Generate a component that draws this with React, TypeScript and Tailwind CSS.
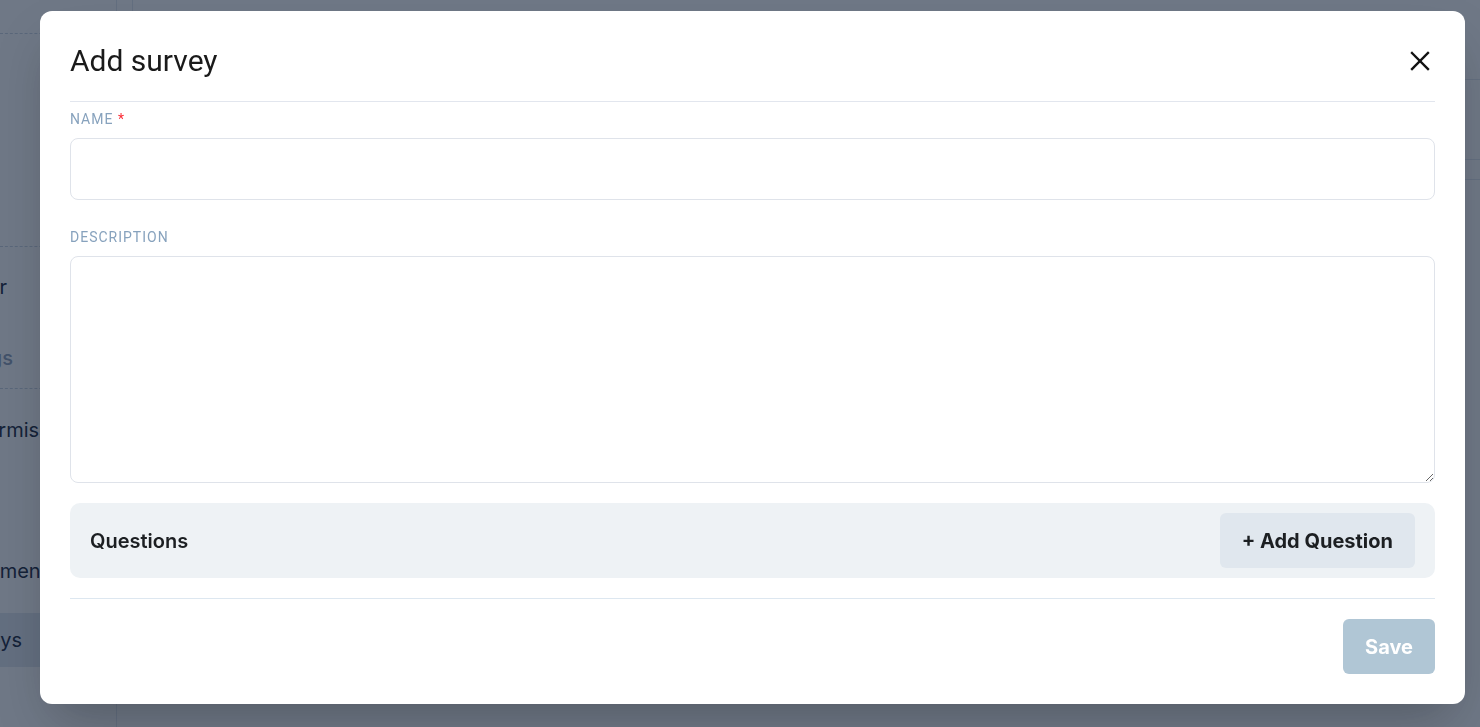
import { useState } from "react";

function CloseIcon() {
  return (
    <svg width="20" height="20" viewBox="0 0 20 20" fill="none" stroke="#111" strokeWidth="2.3" strokeLinecap="square">
      <path d="M2 2 L18 18" />
      <path d="M18 2 L2 18" />
    </svg>
  );
}

function SideItem({ label, end, className = "" }: { label: string; end: number; className?: string }) {
  // text is right-aligned to `end` and spills left, out of the sidebar
  return (
    <div className="flex justify-end whitespace-nowrap" style={{ width: end }}>
      <span className={className}>{label}</span>
    </div>
  );
}

function Background() {
  return (
    <div className="flex h-[727px] w-full bg-white font-['Inter',sans-serif]">
      <aside className="flex w-[117px] shrink-0 flex-col overflow-hidden border-r border-slate-200 bg-white">
        <div className="h-[34px] border-b border-dashed border-slate-300" />
        <div className="h-[213px] border-b border-dashed border-slate-300" />
        <div className="flex h-[80px] items-center text-[20px] text-slate-800">
          <SideItem label="Calendar" end={7} />
        </div>
        <div className="flex h-[62px] items-center border-b border-dashed border-slate-300 text-[20px] font-medium text-slate-400">
          <SideItem label="Settings" end={13} />
        </div>
        <div className="flex h-[82px] items-center text-[20px] text-slate-800">
          <span className="-ml-[26px] whitespace-nowrap">Permissions</span>
        </div>
        <div className="h-[58px]" />
        <div className="flex h-[84px] items-center text-[20px] text-slate-800">
          <span className="-ml-[50px] whitespace-nowrap">Documents</span>
        </div>
        <div className="flex h-[54px] items-center bg-slate-200 text-[20px] text-slate-800">
          <SideItem label="Surveys" end={22} />
        </div>
      </aside>
      <main className="flex flex-1 flex-col">
        <div className="flex h-[80px] border-b border-slate-200">
          <div className="w-[16px] border-r border-slate-200" />
        </div>
        <div className="h-[80px] border-b border-slate-200" />
        <div className="h-[20px] border-b border-slate-200" />
      </main>
    </div>
  );
}

export default function App() {
  const [name, setName] = useState("");
  const [description, setDescription] = useState("");

  return (
    <div className="relative h-[727px] w-[1480px] overflow-hidden">
      <Background />

      <div className="fixed inset-0 bg-[rgba(15,30,53,0.6)]">
        <div className="ml-[40px] mt-[11px] flex w-[1425px] flex-col rounded-[12px] bg-white px-[30px] pb-[30px] pt-[30px] shadow-2xl">
          <div className="flex items-center justify-between border-b border-[#e2e6ee] pb-[20px]">
            <h2 className="font-['Roboto',sans-serif] text-[30px] leading-[40px] text-[#1a1a1a]">Add survey</h2>
            <button className="mr-[5px] flex h-[20px] w-[20px] items-center justify-center">
              <CloseIcon />
            </button>
          </div>

          <label className="mt-[7px] block font-['Roboto',sans-serif] text-[14px] leading-[20px] tracking-[1px] text-[#87a2bd]">
            NAME <span className="text-red-500">*</span>
          </label>
          <input
            value={name}
            onChange={(e) => setName(e.target.value)}
            className="mt-[9px] h-[62px] w-full rounded-[8px] border border-[#dfe3ea] px-4 font-['Roboto',sans-serif] text-[16px] outline-none"
          />

          <label className="mt-[27px] block font-['Roboto',sans-serif] text-[14px] leading-[20px] tracking-[1px] text-[#87a2bd]">
            DESCRIPTION
          </label>
          <textarea
            value={description}
            onChange={(e) => setDescription(e.target.value)}
            className="mt-[9px] h-[227px] w-full rounded-[8px] border border-[#dfe3ea] px-4 py-3 font-['Roboto',sans-serif] text-[16px] outline-none"
          />

          <div className="mt-[20px] flex items-center justify-between rounded-[10px] bg-[#eef2f5] px-[20px] py-[10px] font-['Inter',sans-serif]">
            <span className="text-[20px] font-semibold text-[#1c1f22]">Questions</span>
            <button className="h-[55px] rounded-[6px] bg-[#e0e7ee] px-[22px] text-[20px] font-bold text-[#1c1f22]">
              + Add Question
            </button>
          </div>

          <div className="mt-[20px] border-t border-[#dde7f0]" />

          <div className="mt-[20px] flex justify-end">
            <button
              disabled
              className="h-[55px] w-[92px] rounded-[6px] bg-[#b0c6d5] font-['Inter',sans-serif] text-[20px] font-bold text-white"
            >
              Save
            </button>
          </div>
        </div>
      </div>
    </div>
  );
}
